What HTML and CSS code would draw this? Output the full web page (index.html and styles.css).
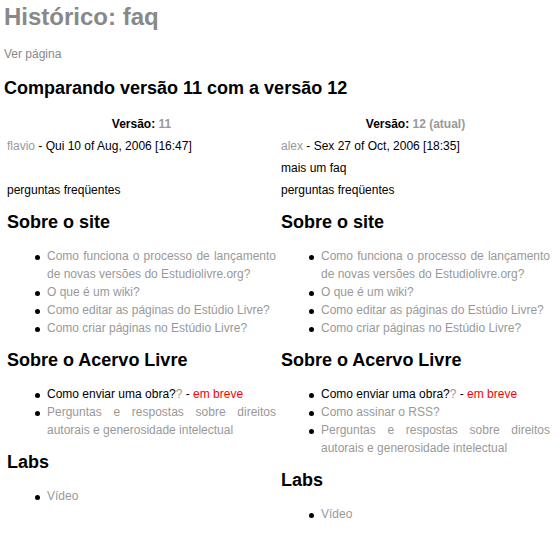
FILE: index.html
```html
<!DOCTYPE html>
<html lang="pt">
<head>
<meta charset="utf-8">
<title>Histórico: faq</title>
<link rel="stylesheet" href="styles.css">
</head>
<body>
<div class="page">
  <h1 class="title">Histórico: faq</h1>
  <a class="view-link" href="#">Ver página</a>
  <h2 class="compare">Comparando versão 11 com a versão 12</h2>
  <div class="diff">
    <div class="col">
      <div class="row ver"><b>Versão:</b> <a href="#">11</a></div>
      <div class="row"><a href="#">flavio</a> - Qui 10 of Aug, 2006 [16:47]</div>
      <div class="row"></div>
      <div class="row">perguntas freqüentes</div>
      <h2 class="sec">Sobre o site</h2>
      <ul class="items">
        <li><a href="#">Como funciona o processo de lançamento de novas versões do Estudiolivre.org?</a></li>
        <li><a href="#">O que é um wiki?</a></li>
        <li><a href="#">Como editar as páginas do Estúdio Livre?</a></li>
        <li><a href="#">Como criar páginas no Estúdio Livre?</a></li>
      </ul>
      <h2 class="sec">Sobre o Acervo Livre</h2>
      <ul class="items">
        <li>Como enviar uma obra?<a href="#">?</a> - <span class="soon">em breve</span></li>
        <li><a href="#">Perguntas e respostas sobre direitos autorais e generosidade intelectual</a></li>
      </ul>
      <h2 class="sec">Labs</h2>
      <ul class="items">
        <li><a href="#">Vídeo</a></li>
      </ul>
    </div>
    <div class="col">
      <div class="row ver"><b>Versão:</b> <a href="#">12 (atual)</a></div>
      <div class="row"><a href="#">alex</a> - Sex 27 of Oct, 2006 [18:35]</div>
      <div class="row">mais um faq</div>
      <div class="row">perguntas freqüentes</div>
      <h2 class="sec">Sobre o site</h2>
      <ul class="items">
        <li><a href="#">Como funciona o processo de lançamento de novas versões do Estudiolivre.org?</a></li>
        <li><a href="#">O que é um wiki?</a></li>
        <li><a href="#">Como editar as páginas do Estúdio Livre?</a></li>
        <li><a href="#">Como criar páginas no Estúdio Livre?</a></li>
      </ul>
      <h2 class="sec">Sobre o Acervo Livre</h2>
      <ul class="items">
        <li>Como enviar uma obra?<a href="#">?</a> - <span class="soon">em breve</span></li>
        <li><a href="#">Como assinar o RSS?</a></li>
        <li><a href="#">Perguntas e respostas sobre direitos autorais e generosidade intelectual</a></li>
      </ul>
      <h2 class="sec">Labs</h2>
      <ul class="items">
        <li><a href="#">Vídeo</a></li>
      </ul>
    </div>
  </div>
</div>
</body>
</html>
```
FILE: styles.css
```css
html, body {
  margin: 0;
  padding: 0;
  background: #fff;
}
body {
  font-family: "Liberation Sans", Arial, sans-serif;
  font-size: 12px;
  color: #000;
}
a {
  color: #999;
  text-decoration: none;
}
.page {
  padding: 3px 4px 0 4px;
}
.title {
  margin: 0;
  font-size: 24px;
  font-weight: bold;
  color: #888;
  line-height: 28px;
}
.view-link {
  display: block;
  margin-top: 16px;
  color: #888;
  line-height: 14px;
}
.compare {
  margin: 17px 0 14px 0;
  font-size: 18px;
  font-weight: bold;
  line-height: 21px;
}
.diff {
  display: grid;
  grid-template-columns: 269px 269px;
  column-gap: 5px;
  padding-left: 3px;
}
.col {
  display: flex;
  flex-direction: column;
}
.row {
  line-height: 22px;
  min-height: 22px;
}
.ver {
  text-align: center;
  font-weight: bold;
}
.ver a {
  font-weight: bold;
}
.sec {
  margin: 11px 0 14px 0;
  font-size: 18px;
  font-weight: bold;
  line-height: 21px;
}
.items {
  margin: 0 0 13px 0;
  padding-left: 40px;
  list-style: none;
}
.items li {
  position: relative;
  line-height: 18px;
  text-align: justify;
}
.items li::before {
  content: "";
  position: absolute;
  left: -12px;
  top: 8px;
  width: 5px;
  height: 5px;
  border-radius: 50%;
  background: #000;
}
.items + .sec {
  margin-top: 0;
}
.soon {
  color: #f00;
}
```
